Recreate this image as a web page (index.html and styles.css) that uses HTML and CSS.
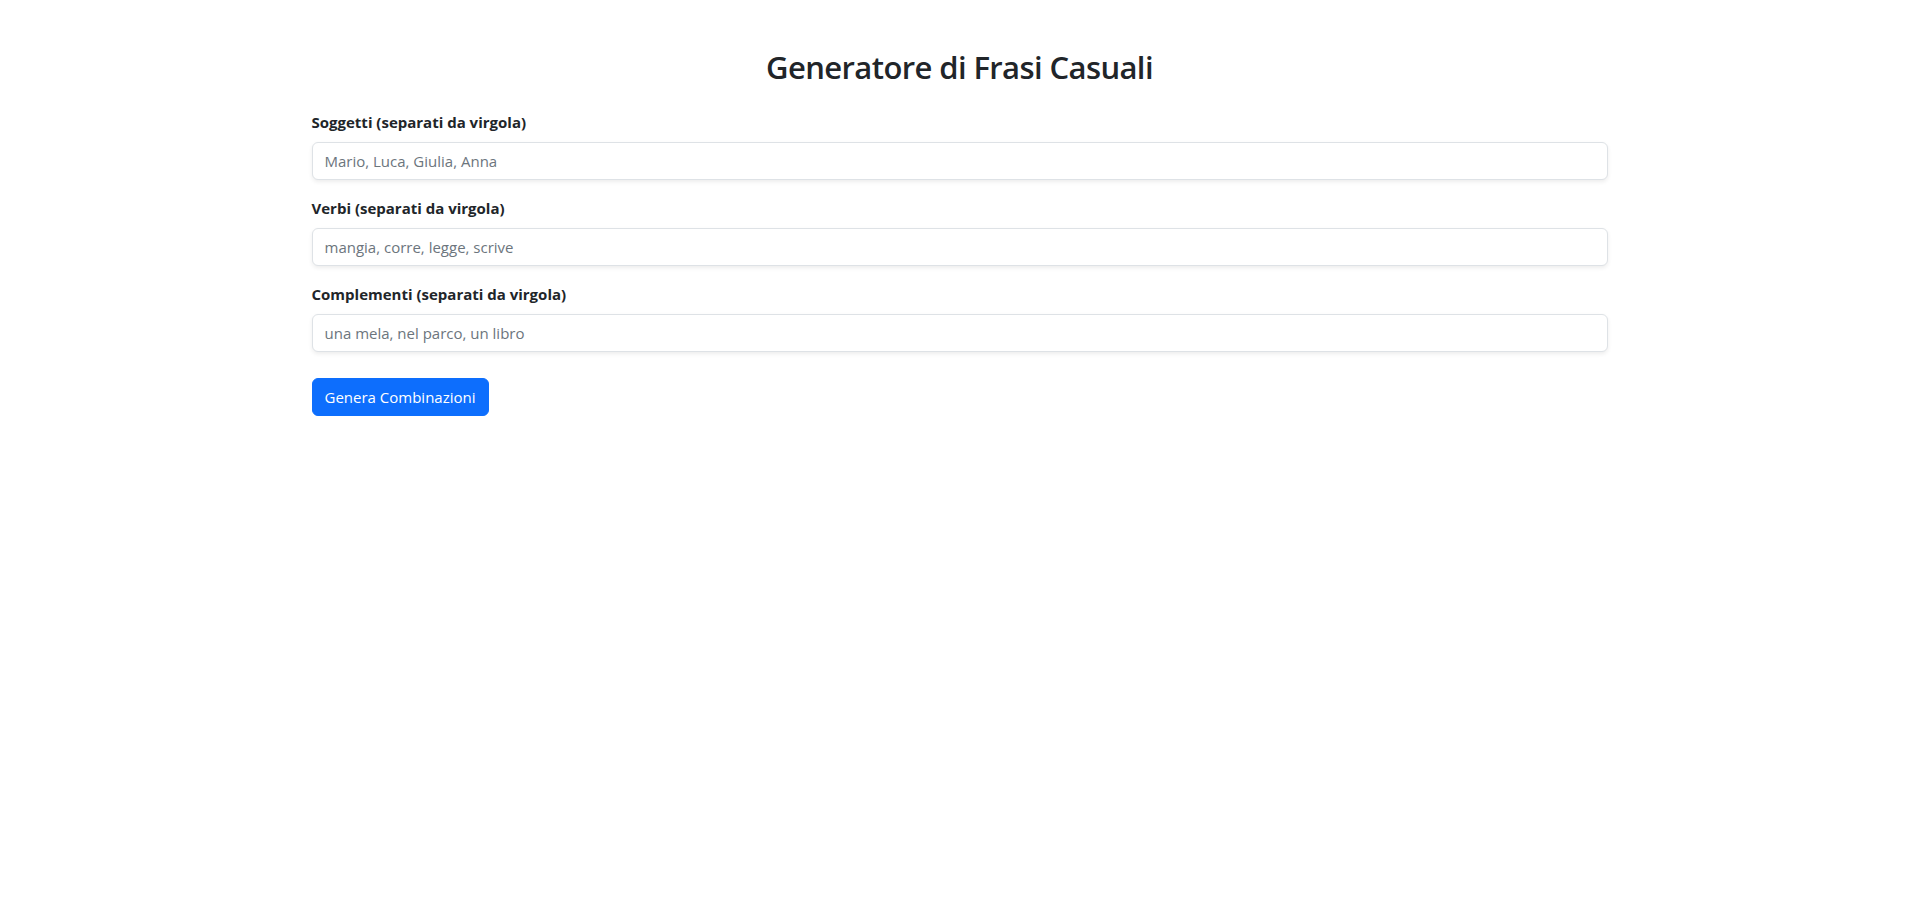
FILE: index.html
```html
<!DOCTYPE html>
<html lang="it">
<head>
<meta charset="utf-8">
<title>Generatore di Frasi Casuali</title>
<link rel="stylesheet" href="styles.css">
</head>
<body>
<main class="container">
  <h2 class="title">Generatore di Frasi Casuali</h2>
  <form class="form">
    <div class="group">
      <label class="label" for="soggetti">Soggetti (separati da virgola)</label>
      <input class="input" id="soggetti" type="text" placeholder="Mario, Luca, Giulia, Anna">
    </div>
    <div class="group">
      <label class="label" for="verbi">Verbi (separati da virgola)</label>
      <input class="input" id="verbi" type="text" placeholder="mangia, corre, legge, scrive">
    </div>
    <div class="group">
      <label class="label" for="complementi">Complementi (separati da virgola)</label>
      <input class="input" id="complementi" type="text" placeholder="una mela, nel parco, un libro">
    </div>
    <div class="actions">
      <button class="btn" type="button">Genera Combinazioni</button>
    </div>
  </form>
</main>
</body>
</html>
```

FILE: styles.css
```css
* { box-sizing: border-box; }
html, body { margin: 0; padding: 0; background: #fff; }
body {
  font-family: "Open Sans", "Noto Sans", sans-serif;
  font-size: 16px;
  line-height: 1.5;
  color: #212529;
}
.container {
  width: 1320px;
  margin: 48px auto 0;
  padding: 0 12px;
}
.title {
  margin: 0 0 24px;
  text-align: center;
  font-size: 31px;
  font-weight: 600;
  line-height: 38.4px;
  letter-spacing: -0.6px;
}
.form { display: flex; flex-direction: column; }
.group { display: flex; flex-direction: column; margin-bottom: 16px; }
.label {
  font-weight: 700;
  font-size: 15px;
  line-height: 24px;
  margin-bottom: 8px;
}
.input {
  display: block;
  width: 100%;
  height: 38px;
  padding: 6px 12px;
  font-family: inherit;
  font-size: 15px;
  color: #212529;
  border: 1px solid #dee2e6;
  border-radius: 6px;
  box-shadow: 0 2px 4px rgba(0,0,0,0.075);
  background: #fff;
  outline: none;
}
.input::placeholder { color: #6c757d; opacity: 1; }
.actions { margin-top: 10px; }
.btn {
  height: 38px;
  padding: 6px 12px;
  font-family: inherit;
  font-size: 15px;
  line-height: 24px;
  color: #fff;
  background: #0d6efd;
  border: 1px solid #0d6efd;
  border-radius: 6px;
  cursor: pointer;
}
```
